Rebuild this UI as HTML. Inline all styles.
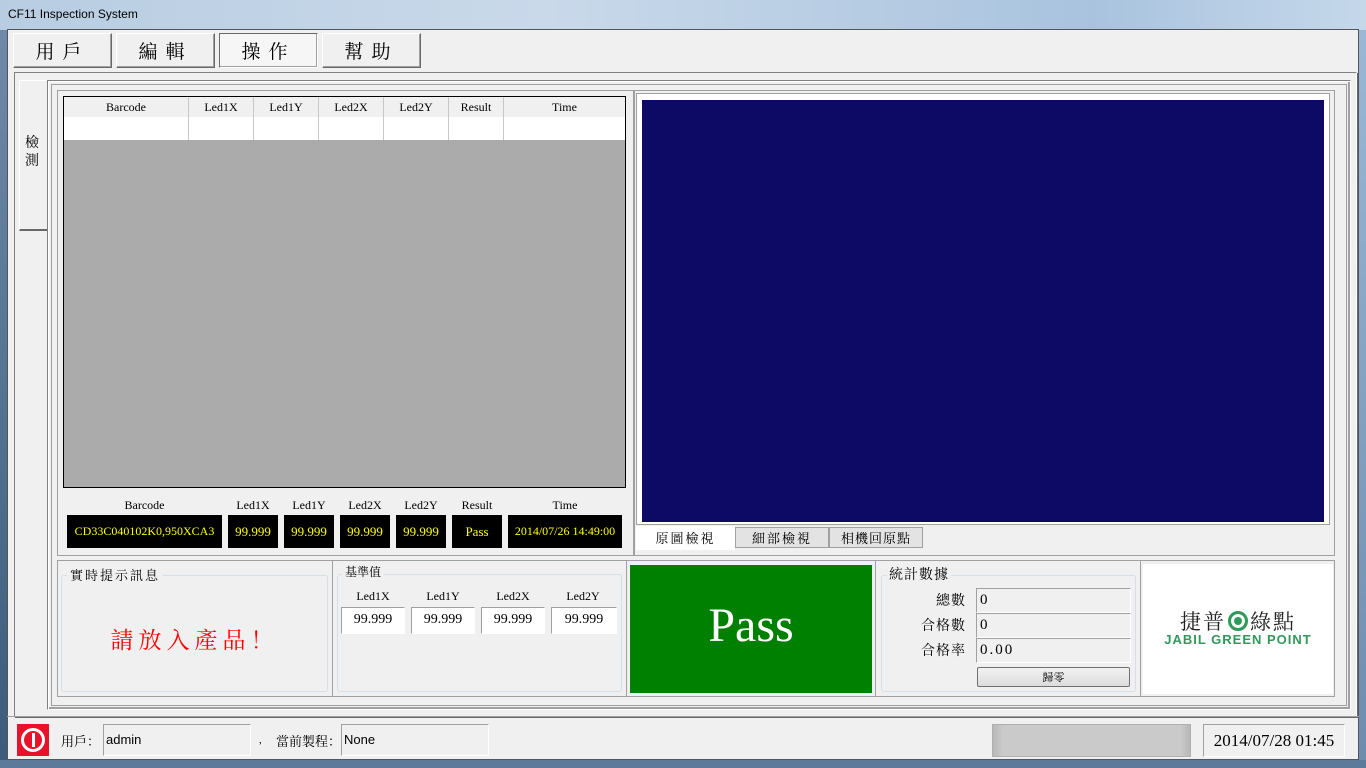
<!DOCTYPE html>
<html><head><meta charset="utf-8"><style>
*{margin:0;padding:0;box-sizing:border-box}
body{width:1366px;height:768px;overflow:hidden;background:#a9c3dc;font-family:"Liberation Serif","Noto Serif CJK SC","Noto Sans CJK TC",serif;position:relative}
.a{position:absolute}
.cjk{font-family:"Noto Serif CJK SC","Noto Sans CJK TC",serif}
.btn{background:#f0f0f0;border:1px solid #fff;border-right-color:#696969;border-bottom-color:#696969;box-shadow:inset -1px -1px 0 #a0a0a0;font-size:19px;text-align:center;line-height:33px;letter-spacing:8px}
.sunk{border:1px solid #a0a0a0;border-right-color:#fff;border-bottom-color:#fff}
.box{background:#000;color:#ffff00;font-size:13px;text-align:center;line-height:33px;white-space:nowrap}
.lbl{font-size:12px;text-align:center}
.th{position:absolute;top:0;height:20px;border-right:1px solid #c8c8c8;font-size:12px;text-align:center;line-height:20px;background:#f0f0f0}
.td{position:absolute;top:20px;height:23px;border-right:1px solid #c8c8c8;background:#fff}
.grp{border:1px solid #d5dfe5;border-radius:3px}
.val{background:#fff;border:1px solid #a0a0a0;border-right-color:#fff;border-bottom-color:#fff;font-size:14px;text-align:center;line-height:24px}
</style></head><body>
<div class="a" style="left:0;top:0;width:1366px;height:30px;background:linear-gradient(90deg,#b8cde2,#c9d9ea 40%,#a9c3de 80%,#c5d8ea)"></div>
<div class="a" style="left:8px;top:7px;font-family:'Liberation Sans',sans-serif;font-size:12px;color:#000">CF11 Inspection System</div>
<div class="a" style="left:0;top:30px;width:7px;height:738px;background:linear-gradient(#6f8aa8,#3c5a7c)"></div>
<div class="a" style="left:1359px;top:30px;width:7px;height:738px;background:linear-gradient(#9ab8d6,#6c8cae)"></div>
<div class="a" style="left:0;top:760px;width:1366px;height:8px;background:#5d7a9a"></div>
<div class="a" style="left:7px;top:29px;width:1352px;height:731px;background:#f0f0f0;border:1px solid #555"></div>

<div class="a btn cjk" style="left:13px;top:33px;width:99px;height:35px">用戶</div>
<div class="a btn cjk" style="left:116px;top:33px;width:99px;height:35px">編輯</div>
<div class="a btn cjk" style="left:219px;top:33px;width:99px;height:35px;background:#f6f6f6;border-color:#696969 #fff #fff #696969">操作</div>
<div class="a btn cjk" style="left:322px;top:33px;width:99px;height:35px">幫助</div>

<div class="a" style="left:14px;top:72px;width:1343px;height:645px;border:1px solid #fff;border-top-color:#808080;border-left-color:#808080;box-shadow:1px 1px 0 #696969"></div>
<div class="a" style="left:19px;top:80px;width:29px;height:151px;background:#f0f0f0;border:1px solid #fff;border-bottom:2px solid #696969;border-right:none"></div>
<div class="a cjk" style="left:25px;top:133px;font-size:14px;line-height:18px;width:16px">檢測</div>
<div class="a" style="left:47px;top:80px;width:1304px;height:630px;border:1px solid #808080;border-right-color:#fff;border-bottom-color:#fff;box-shadow:inset 1px 1px 0 #fff,inset -2px -2px 0 #a0a0a0"></div>
<div class="a" style="left:51px;top:84px;width:1296px;height:622px;border:1px solid #a0a0a0"></div>

<div class="a" style="left:57px;top:90px;width:577px;height:466px;border:1px solid #a0a0a0"></div>
<div class="a" style="left:63px;top:96px;width:563px;height:392px;border:1px solid #000;background:#ababab">
 <div class="th" style="left:0;width:125px">Barcode</div>
 <div class="th" style="left:125px;width:65px">Led1X</div>
 <div class="th" style="left:190px;width:65px">Led1Y</div>
 <div class="th" style="left:255px;width:65px">Led2X</div>
 <div class="th" style="left:320px;width:65px">Led2Y</div>
 <div class="th" style="left:385px;width:55px">Result</div>
 <div class="th" style="left:440px;width:121px;border-right:none">Time</div>
 <div class="td" style="left:0;width:125px"></div><div class="td" style="left:125px;width:65px"></div><div class="td" style="left:190px;width:65px"></div><div class="td" style="left:255px;width:65px"></div><div class="td" style="left:320px;width:65px"></div><div class="td" style="left:385px;width:55px"></div><div class="td" style="left:440px;width:121px;border-right:none"></div>
</div>
<div class="a lbl" style="left:67px;top:498px;width:155px">Barcode</div>
<div class="a lbl" style="left:228px;top:498px;width:50px">Led1X</div>
<div class="a lbl" style="left:284px;top:498px;width:50px">Led1Y</div>
<div class="a lbl" style="left:340px;top:498px;width:50px">Led2X</div>
<div class="a lbl" style="left:396px;top:498px;width:50px">Led2Y</div>
<div class="a lbl" style="left:452px;top:498px;width:50px">Result</div>
<div class="a lbl" style="left:508px;top:498px;width:114px">Time</div>
<div class="a box" style="left:67px;top:515px;width:155px;height:33px;font-size:12px">CD33C040102K0,950XCA3</div>
<div class="a box" style="left:228px;top:515px;width:50px;height:33px">99.999</div>
<div class="a box" style="left:284px;top:515px;width:50px;height:33px">99.999</div>
<div class="a box" style="left:340px;top:515px;width:50px;height:33px">99.999</div>
<div class="a box" style="left:396px;top:515px;width:50px;height:33px">99.999</div>
<div class="a box" style="left:452px;top:515px;width:50px;height:33px">Pass</div>
<div class="a box" style="left:508px;top:515px;width:114px;height:33px;font-size:12px">2014/07/26 14:49:00</div>

<div class="a" style="left:634px;top:90px;width:701px;height:466px;border:1px solid #a0a0a0"></div>
<div class="a" style="left:636px;top:93px;width:694px;height:432px;border:1px solid #a0a0a0;background:#fff"></div>
<div class="a" style="left:642px;top:100px;width:682px;height:422px;background:#0c0a64"></div>
<div class="a cjk" style="left:636px;top:526px;width:99px;height:24px;background:#fff;font-size:13px;line-height:24px;text-align:center;letter-spacing:2px">原圖檢視</div>
<div class="a cjk" style="left:735px;top:527px;width:94px;height:21px;background:#e3e3e3;border:1px solid #a0a0a0;font-size:13px;line-height:19px;text-align:center;letter-spacing:2px">細部檢視</div>
<div class="a cjk" style="left:829px;top:527px;width:94px;height:21px;background:#e3e3e3;border:1px solid #a0a0a0;font-size:13px;line-height:19px;text-align:center;letter-spacing:1px">相機回原點</div>

<div class="a" style="left:57px;top:560px;width:1278px;height:137px;border:1px solid #a0a0a0"></div>
<div class="a" style="left:332px;top:561px;width:1px;height:135px;background:#a0a0a0"></div>
<div class="a" style="left:626px;top:561px;width:1px;height:135px;background:#a0a0a0"></div>
<div class="a" style="left:875px;top:561px;width:1px;height:135px;background:#a0a0a0"></div>
<div class="a" style="left:1140px;top:561px;width:1px;height:135px;background:#a0a0a0"></div>
<div class="a grp" style="left:61px;top:575px;width:267px;height:117px"></div>
<div class="a cjk" style="left:67px;top:565px;font-size:13px;background:#f0f0f0;padding:0 3px;letter-spacing:2px">實時提示訊息</div>
<div class="a cjk" style="left:61px;top:622px;width:267px;text-align:center;color:#ff0000;font-size:23px;letter-spacing:5px">請放入產品！</div>
<div class="a grp" style="left:337px;top:574px;width:285px;height:118px"></div>
<div class="a cjk" style="left:342px;top:563px;font-size:12px;background:#f0f0f0;padding:0 3px">基準值</div>
<div class="a lbl" style="left:341px;top:589px;width:64px">Led1X</div>
<div class="a lbl" style="left:411px;top:589px;width:64px">Led1Y</div>
<div class="a lbl" style="left:481px;top:589px;width:64px">Led2X</div>
<div class="a lbl" style="left:551px;top:589px;width:64px">Led2Y</div>
<div class="a val" style="left:341px;top:607px;width:64px;height:27px">99.999</div>
<div class="a val" style="left:411px;top:607px;width:64px;height:27px">99.999</div>
<div class="a val" style="left:481px;top:607px;width:64px;height:27px">99.999</div>
<div class="a val" style="left:551px;top:607px;width:66px;height:27px">99.999</div>
<div class="a" style="left:630px;top:565px;width:242px;height:128px;background:#008000;color:#fff;font-size:48px;text-align:center;line-height:122px">Pass</div>
<div class="a grp" style="left:881px;top:575px;width:255px;height:117px"></div>
<div class="a cjk" style="left:887px;top:564px;font-size:14px;background:#f0f0f0;padding:0 2px;letter-spacing:1px">統計數據</div>
<div class="a cjk" style="left:880px;top:591px;width:86px;text-align:right;font-size:14px;line-height:18px;letter-spacing:1px">總數</div>
<div class="a cjk" style="left:880px;top:616px;width:86px;text-align:right;font-size:14px;line-height:18px;letter-spacing:1px">合格數</div>
<div class="a cjk" style="left:880px;top:641px;width:86px;text-align:right;font-size:14px;line-height:18px;letter-spacing:1px">合格率</div>
<div class="a sunk" style="left:976px;top:588px;width:155px;height:25px;font-size:15px;line-height:23px;padding-left:3px">0</div>
<div class="a sunk" style="left:976px;top:613px;width:155px;height:25px;font-size:15px;line-height:23px;padding-left:3px">0</div>
<div class="a sunk" style="left:976px;top:638px;width:155px;height:25px;font-size:15px;line-height:23px;padding-left:3px;letter-spacing:2px">0.00</div>
<div class="a cjk" style="left:977px;top:667px;width:153px;height:20px;border:1px solid #707070;border-radius:2px;background:linear-gradient(#f2f2f2,#dcdcdc);font-size:11px;text-align:center;line-height:18px">歸零</div>
<div class="a" style="left:1143px;top:564px;width:190px;height:130px;background:#fff"></div>
<div class="a cjk" style="left:1143px;top:606px;width:190px;text-align:center;font-size:21px;color:#222;letter-spacing:2px">捷普<span style="display:inline-block;width:20px;height:20px;border-radius:50%;background:#2f9a5a;border:3px solid #2f9a5a;box-shadow:inset 0 0 0 3px #fff;vertical-align:-2px;margin:0 2px"></span>綠點</div>
<div class="a" style="left:1143px;top:632px;width:190px;text-align:center;font-family:'Liberation Sans',sans-serif;font-weight:bold;font-size:13px;color:#2f9a5a;letter-spacing:1px">JABIL GREEN POINT</div>

<div class="a" style="left:7px;top:716px;width:1352px;height:1px;background:#a0a0a0"></div>
<div class="a" style="left:17px;top:724px;width:32px;height:32px;background:#e8132a"></div>
<div class="a" style="left:21px;top:728px;width:24px;height:24px;border:3px solid #fff;border-radius:50%"></div>
<div class="a" style="left:32px;top:733px;width:3px;height:14px;background:#fff"></div>
<div class="a cjk" style="left:61px;top:731px;font-size:13px">用戶：</div>
<div class="a sunk" style="left:103px;top:724px;width:148px;height:32px;font-family:'Liberation Sans',sans-serif;font-size:13px;line-height:30px;padding-left:2px">admin</div>
<div class="a" style="left:259px;top:734px;font-size:11px">,</div>
<div class="a cjk" style="left:276px;top:731px;font-size:13px">當前製程：</div>
<div class="a sunk" style="left:341px;top:724px;width:148px;height:32px;font-family:'Liberation Sans',sans-serif;font-size:13px;line-height:30px;padding-left:2px">None</div>
<div class="a" style="left:992px;top:724px;width:199px;height:33px;border:1px solid #b0b0b0;background:linear-gradient(90deg,#b8b8b8,#cacaca 5%,#cacaca 95%,#b8b8b8)"></div>
<div class="a sunk" style="left:1203px;top:724px;width:142px;height:33px;font-size:17px;line-height:31px;text-align:center">2014/07/28 01:45</div>
</body></html>
